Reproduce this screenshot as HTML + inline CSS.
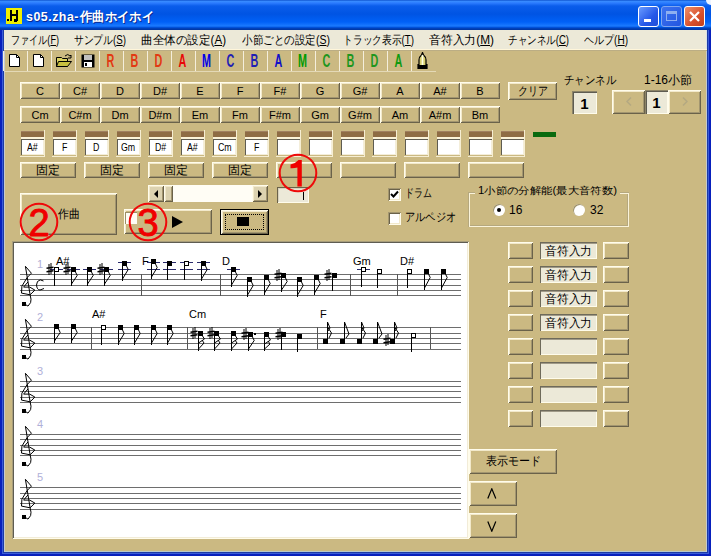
<!DOCTYPE html><html><head><meta charset="utf-8"><style>
*{margin:0;padding:0;box-sizing:border-box}
html,body{width:711px;height:556px;overflow:hidden;background:#fff}
body{position:relative;font-family:"Liberation Sans",sans-serif;font-size:11px;color:#000}
.a{position:absolute}
.b{position:absolute;background:#CBB982;box-shadow:inset 1px 1px 0 #FFFCEB,inset -1px -1px 0 #6A624A,inset 2px 2px 0 #F2E9CB,inset -2px -2px 0 #A39670;display:flex;align-items:center;justify-content:center;font-size:11px;white-space:nowrap}
.sunk{position:absolute;background:#fff;box-shadow:inset 1px 1px 0 #A39670,inset -1px -1px 0 #FFFCEB,inset 2px 2px 0 #6A624A,inset -2px -2px 0 #F2E9CB}
.sn{font-family:"Liberation Sans",sans-serif;font-size:11px;fill:#B0B0D8}
.ch{font-family:"Liberation Sans",sans-serif;font-size:11px;fill:#000}
.m{position:absolute;top:32px;font-size:12px;white-space:nowrap}
.tb{position:absolute;top:50px;width:24px;height:22px;display:flex;align-items:center;justify-content:center;font:18px "Liberation Sans",sans-serif;line-height:22px}
.tb span{display:inline-block;transform:scaleX(0.6)}
</style></head><body><div class="a" style="left:0;top:0;width:711px;height:556px;background:#0820BC"></div><div class="a" style="left:2px;top:29px;width:1px;height:525px;background:#3A5CD8"></div><div class="a" style="left:3px;top:29px;width:1px;height:524px;background:#1C3AA6"></div><div class="a" style="left:708px;top:29px;width:1px;height:525px;background:#3A5CD8"></div><div class="a" style="left:707px;top:29px;width:1px;height:524px;background:#1C3AA6"></div><div class="a" style="left:2px;top:553px;width:707px;height:1px;background:#3A5CD8"></div><div class="a" style="left:3px;top:552px;width:705px;height:1px;background:#1C3AA6"></div><div class="a" style="left:0;top:0;width:711px;height:30px;background:linear-gradient(#0040C0 0px,#3A8EFF 1px,#2C7CFF 3px,#0A5DEB 6px,#0054E3 14px,#0061F7 22px,#1A7AFF 26px,#0050D8 27.5px,#0038A8 29px,#0038A8 30px)"></div><div class="a" style="left:706px;top:0;width:5px;height:5px;background:#EDF3FF;border-bottom-left-radius:5px"></div><div class="a" style="left:4px;top:30px;width:703px;height:522px;background:#CBB982;box-shadow:inset 1px 0 0 #C4CAD0,inset -1px 0 0 #C4CAD0,inset 0 -1px 0 #B8C8CC"></div><div class="a" style="left:4px;top:30px;width:703px;height:19px;background:#ECE9D8;box-shadow:inset -1px 0 0 #D8E0E8"></div><div class="a" style="left:4px;top:49px;width:703px;height:1px;background:#FFF6DA"></div><div class="a" style="left:4px;top:50px;width:703px;height:1px;background:#BBAD84"></div><div class="m" style="left:11px"><span style="display:inline-block;white-space:nowrap;width:48px;vertical-align:top"><span style="display:inline-block;white-space:nowrap;font-size:12px;transform:scaleX(0.7578);transform-origin:0 50%">ファイル(<u>F</u>)</span></span></div><div class="m" style="left:74px"><span style="display:inline-block;white-space:nowrap;width:52px;vertical-align:top"><span style="display:inline-block;white-space:nowrap;font-size:12px;transform:scaleX(0.8123);transform-origin:0 50%">サンプル(<u>S</u>)</span></span></div><div class="m" style="left:141px"><span style="display:inline-block;white-space:nowrap;width:85px;vertical-align:top"><span style="display:inline-block;white-space:nowrap;font-size:12px;transform:scaleX(0.9657);transform-origin:0 50%">曲全体の設定(<u>A</u>)</span></span></div><div class="m" style="left:242px"><span style="display:inline-block;white-space:nowrap;width:88px;vertical-align:top"><span style="display:inline-block;white-space:nowrap;font-size:12px;transform:scaleX(0.8799);transform-origin:0 50%">小節ごとの設定(<u>S</u>)</span></span></div><div class="m" style="left:343px"><span style="display:inline-block;white-space:nowrap;width:71px;vertical-align:top"><span style="display:inline-block;white-space:nowrap;font-size:12px;transform:scaleX(0.8129);transform-origin:0 50%">トラック表示(<u>T</u>)</span></span></div><div class="m" style="left:429px"><span style="display:inline-block;white-space:nowrap;width:65px;vertical-align:top"><span style="display:inline-block;white-space:nowrap;font-size:12px;transform:scaleX(0.9848);transform-origin:0 50%">音符入力(<u>M</u>)</span></span></div><div class="m" style="left:508px"><span style="display:inline-block;white-space:nowrap;width:61px;vertical-align:top"><span style="display:inline-block;white-space:nowrap;font-size:12px;transform:scaleX(0.7956);transform-origin:0 50%">チャンネル(<u>C</u>)</span></span></div><div class="m" style="left:584px"><span style="display:inline-block;white-space:nowrap;width:44px;vertical-align:top"><span style="display:inline-block;white-space:nowrap;font-size:12px;transform:scaleX(0.8354);transform-origin:0 50%">ヘルプ(<u>H</u>)</span></span></div><div class="a" style="left:6px;top:8px;width:16px;height:16px;background:#F0F000"><div class="a" style="left:4px;top:2px;width:2px;height:11px;background:#000"></div><div class="a" style="left:10px;top:2px;width:2px;height:11px;background:#000"></div><div class="a" style="left:4px;top:6px;width:8px;height:2px;background:#000"></div><div class="a" style="left:8px;top:11px;width:3px;height:3px;background:#000"></div><div class="a" style="left:1px;top:11px;width:2px;height:2px;background:#000"></div></div><div class="a" style="left:26px;top:9px;color:#fff;text-shadow:1px 1px 0 #0A2A90;white-space:nowrap;font-weight:bold;line-height:15px"><span style="display:inline-block;white-space:nowrap;width:53px;vertical-align:top"><span style="display:inline-block;white-space:nowrap;font-size:13px;font-weight:bold;letter-spacing:0.5px;transform:scaleX(0.9582);transform-origin:0 50%">s05.zha-</span></span></div><div class="a" style="left:80px;top:9px;color:#fff;text-shadow:1px 1px 0 #0A2A90;white-space:nowrap;font-weight:bold;line-height:15px"><span style="display:inline-block;white-space:nowrap;width:74px;vertical-align:top"><span style="display:inline-block;white-space:nowrap;font-size:13px;font-weight:bold;transform:scaleX(0.9487);transform-origin:0 50%">作曲ホイホイ</span></span></div><div class="a" style="left:638px;top:6px;width:21px;height:21px;border:1px solid #fff;border-radius:3px;background:linear-gradient(135deg,#6A9CFF,#2558E8 60%,#1F4FD8)"><div class="a" style="left:5px;top:12px;width:7px;height:3px;background:#fff"></div></div><div class="a" style="left:661px;top:6px;width:21px;height:21px;border:1px solid #7FA6F0;border-radius:3px;background:linear-gradient(135deg,#3E73F0,#2256E0)"><div class="a" style="left:4px;top:4px;width:11px;height:10px;border:1px solid #8FB0F0;border-top-width:3px"></div></div><div class="a" style="left:684px;top:6px;width:21px;height:21px;border:1px solid #fff;border-radius:3px;background:linear-gradient(135deg,#F0906A,#D8502C 60%,#C0401E)"><svg width="19" height="19" style="position:absolute;left:0;top:0"><path d="M5,5 L14,14 M14,5 L5,14" stroke="#fff" stroke-width="2.2"/></svg></div><div class="a" style="left:3px;top:51px;width:1px;height:20px;background:#F4EEDC"></div><div class="a" style="left:27px;top:51px;width:1px;height:20px;background:#F4EEDC"></div><div class="a" style="left:51px;top:51px;width:1px;height:20px;background:#F4EEDC"></div><div class="a" style="left:75px;top:51px;width:1px;height:20px;background:#F4EEDC"></div><div class="a" style="left:99px;top:51px;width:1px;height:20px;background:#F4EEDC"></div><div class="a" style="left:123px;top:51px;width:1px;height:20px;background:#F4EEDC"></div><div class="a" style="left:147px;top:51px;width:1px;height:20px;background:#F4EEDC"></div><div class="a" style="left:171px;top:51px;width:1px;height:20px;background:#F4EEDC"></div><div class="a" style="left:195px;top:51px;width:1px;height:20px;background:#F4EEDC"></div><div class="a" style="left:219px;top:51px;width:1px;height:20px;background:#F4EEDC"></div><div class="a" style="left:243px;top:51px;width:1px;height:20px;background:#F4EEDC"></div><div class="a" style="left:267px;top:51px;width:1px;height:20px;background:#F4EEDC"></div><div class="a" style="left:291px;top:51px;width:1px;height:20px;background:#F4EEDC"></div><div class="a" style="left:315px;top:51px;width:1px;height:20px;background:#F4EEDC"></div><div class="a" style="left:339px;top:51px;width:1px;height:20px;background:#F4EEDC"></div><div class="a" style="left:363px;top:51px;width:1px;height:20px;background:#F4EEDC"></div><div class="a" style="left:387px;top:51px;width:1px;height:20px;background:#F4EEDC"></div><div class="a" style="left:411px;top:51px;width:1px;height:20px;background:#F4EEDC"></div><div class="a" style="left:4px;top:71px;width:432px;height:1px;background:#E4D9B6"></div><svg class="a" style="left:8px;top:54px" width="14" height="14"><path d="M1.5,0.5 H8.5 L11.5,3.5 V12.5 H1.5 Z" fill="#fff" stroke="#000"/><path d="M8.5,0.5 V3.5 H11.5" fill="none" stroke="#000"/></svg><svg class="a" style="left:32px;top:54px" width="14" height="14"><path d="M1.5,0.5 H8.5 L11.5,3.5 V12.5 H1.5 Z" fill="#fff" stroke="#000"/><path d="M8.5,0.5 V3.5 H11.5" fill="none" stroke="#000"/></svg><svg class="a" style="left:55px;top:53px" width="18" height="16"><path d="M1.5,4.5 H6.5 L7.5,5.5 H12.5 V13.5 H1.5 Z" fill="#D8D060" stroke="#000"/><path d="M3.5,8.5 H16.5 L12.5,13.5 H1.5 Z" fill="#C8C040" stroke="#000"/><path d="M10,3 Q13,0 15,3 L16,2 L16,5 L13,5" fill="none" stroke="#000"/></svg><svg class="a" style="left:81px;top:54px" width="14" height="14"><rect x="0.5" y="0.5" width="13" height="13" fill="#000"/><rect x="3" y="1" width="8" height="5" fill="#C0C0C0"/><rect x="3" y="8" width="8" height="5" fill="#fff"/><rect x="4" y="9" width="2" height="3" fill="#000"/></svg><div class="tb" style="left:98px;color:#E23A12;font-weight:bold"><span>R</span></div><div class="tb" style="left:122px;color:#E23A12;font-weight:bold"><span>B</span></div><div class="tb" style="left:146px;color:#E23A12;font-weight:bold"><span>D</span></div><div class="tb" style="left:170px;color:#E80808;font-weight:bold"><span>A</span></div><div class="tb" style="left:194px;color:#0000E8;font-weight:bold"><span>M</span></div><div class="tb" style="left:218px;color:#1E1EB4;font-weight:bold"><span>C</span></div><div class="tb" style="left:242px;color:#1E1EB4;font-weight:bold"><span>B</span></div><div class="tb" style="left:266px;color:#1010C8;font-weight:bold"><span>A</span></div><div class="tb" style="left:290px;color:#009A00;font-weight:bold"><span>M</span></div><div class="tb" style="left:314px;color:#1E961E;font-weight:bold"><span>C</span></div><div class="tb" style="left:338px;color:#1E961E;font-weight:bold"><span>B</span></div><div class="tb" style="left:362px;color:#1E961E;font-weight:bold"><span>D</span></div><div class="tb" style="left:386px;color:#109A10;font-weight:bold"><span>A</span></div><svg class="a" style="left:417px;top:52px" width="11" height="18"><path d="M5.5,0.5 L6.5,3 Q9,5 9,8 V12.5 H10 V16.5 H1 V12.5 H2 V8 Q2,5 4.5,3 Z" fill="#D8D070" stroke="#000" stroke-width="1.2"/><path d="M5.5,3 V14" stroke="#FFFFE8" stroke-width="1.6"/><rect x="1" y="13" width="9" height="4" fill="#000"/></svg><div class="b" style="left:20px;top:82px;width:40px;height:17px;"><span style="">C</span></div><div class="b" style="left:60px;top:82px;width:40px;height:17px;"><span style="">C#</span></div><div class="b" style="left:100px;top:82px;width:40px;height:17px;"><span style="">D</span></div><div class="b" style="left:140px;top:82px;width:40px;height:17px;"><span style="">D#</span></div><div class="b" style="left:180px;top:82px;width:40px;height:17px;"><span style="">E</span></div><div class="b" style="left:220px;top:82px;width:40px;height:17px;"><span style="">F</span></div><div class="b" style="left:260px;top:82px;width:40px;height:17px;"><span style="">F#</span></div><div class="b" style="left:300px;top:82px;width:40px;height:17px;"><span style="">G</span></div><div class="b" style="left:340px;top:82px;width:40px;height:17px;"><span style="">G#</span></div><div class="b" style="left:380px;top:82px;width:40px;height:17px;"><span style="">A</span></div><div class="b" style="left:420px;top:82px;width:40px;height:17px;"><span style="">A#</span></div><div class="b" style="left:460px;top:82px;width:40px;height:17px;"><span style="">B</span></div><div class="b" style="left:20px;top:106px;width:40px;height:17px;"><span style="">Cm</span></div><div class="b" style="left:60px;top:106px;width:40px;height:17px;"><span style="">C#m</span></div><div class="b" style="left:100px;top:106px;width:40px;height:17px;"><span style="">Dm</span></div><div class="b" style="left:140px;top:106px;width:40px;height:17px;"><span style="">D#m</span></div><div class="b" style="left:180px;top:106px;width:40px;height:17px;"><span style="">Em</span></div><div class="b" style="left:220px;top:106px;width:40px;height:17px;"><span style="">Fm</span></div><div class="b" style="left:260px;top:106px;width:40px;height:17px;"><span style="">F#m</span></div><div class="b" style="left:300px;top:106px;width:40px;height:17px;"><span style="">Gm</span></div><div class="b" style="left:340px;top:106px;width:40px;height:17px;"><span style="">G#m</span></div><div class="b" style="left:380px;top:106px;width:40px;height:17px;"><span style="">Am</span></div><div class="b" style="left:420px;top:106px;width:40px;height:17px;"><span style="">A#m</span></div><div class="b" style="left:460px;top:106px;width:40px;height:17px;"><span style="">Bm</span></div><div class="b" style="left:508px;top:82px;width:49px;height:18px;"><span style=""><span style="display:inline-block;white-space:nowrap;width:30px;vertical-align:top"><span style="display:inline-block;white-space:nowrap;font-size:12px;transform:scaleX(0.8333);transform-origin:0 50%">クリア</span></span></span></div><div class="a" style="left:564px;top:73px;white-space:nowrap;line-height:14px"><span style="display:inline-block;white-space:nowrap;width:52px;vertical-align:top"><span style="display:inline-block;white-space:nowrap;font-size:12px;transform:scaleX(0.8667);transform-origin:0 50%">チャンネル</span></span></div><div class="a" style="left:644px;top:73px;white-space:nowrap;line-height:14px"><span style="display:inline-block;white-space:nowrap;width:48px;vertical-align:top"><span style="display:inline-block;white-space:nowrap;font-size:12px;transform:scaleX(0.9993);transform-origin:0 50%">1-16小節</span></span></div><div class="a" style="left:572px;top:91px;width:25px;height:23px;background:#ECE9D8;box-shadow:inset 1px 1px 0 #8C8468,inset 2px 2px 0 #5E5C52,inset -1px -1px 0 #FFFCEB;display:flex;align-items:center;justify-content:center;font:bold 15px 'Liberation Sans',sans-serif;padding-top:1px">1</div><div class="b" style="left:612px;top:90px;width:33px;height:24px;"><span style=""><svg width="6" height="9"><path d="M5,0.5 L1,4.5 L5,8.5" fill="none" stroke="#B4A982" stroke-width="1.5"/></svg></span></div><div class="a" style="left:645px;top:90px;width:23px;height:24px;background:#ECE9D8;box-shadow:inset 1px 1px 0 #8C8468,inset 2px 2px 0 #5E5C52,inset -1px -1px 0 #FFFCEB;display:flex;align-items:center;justify-content:center;font:bold 15px 'Liberation Sans',sans-serif;padding-top:1px">1</div><div class="b" style="left:668px;top:90px;width:33px;height:24px;"><span style=""><svg width="6" height="9"><path d="M1,0.5 L5,4.5 L1,8.5" fill="none" stroke="#B4A982" stroke-width="1.5"/></svg></span></div><div class="a" style="left:20px;top:130px;width:25px;height:27px;box-shadow:inset -1px 0 0 #F6EED2,inset 0 -1px 0 #F6EED2"></div><div class="a" style="left:21px;top:131px;width:23px;height:6px;background:#8E6C44;box-shadow:inset 0 1px 0 #A08060"></div><div class="a" style="left:21px;top:137px;width:23px;height:2px;background:#FBF3D8"></div><div class="a" style="left:21px;top:139px;width:23px;height:16px;background:#FFFFFF;box-shadow:inset 1px 1px 0 #5E5C52,inset -1px -1px 0 #F4EEDA"></div><div class="a" style="left:21px;top:139px;width:23px;height:16px;display:flex;align-items:center;justify-content:center;line-height:16px"><span style="display:inline-block;white-space:nowrap;width:10.775px;vertical-align:top"><span style="display:inline-block;white-space:nowrap;font-size:11px;transform:scaleX(0.8000);transform-origin:0 50%">A#</span></span></div><div class="a" style="left:52px;top:130px;width:25px;height:27px;box-shadow:inset -1px 0 0 #F6EED2,inset 0 -1px 0 #F6EED2"></div><div class="a" style="left:53px;top:131px;width:23px;height:6px;background:#8E6C44;box-shadow:inset 0 1px 0 #A08060"></div><div class="a" style="left:53px;top:137px;width:23px;height:2px;background:#FBF3D8"></div><div class="a" style="left:53px;top:139px;width:23px;height:16px;background:#FFFFFF;box-shadow:inset 1px 1px 0 #5E5C52,inset -1px -1px 0 #F4EEDA"></div><div class="a" style="left:53px;top:139px;width:23px;height:16px;display:flex;align-items:center;justify-content:center;line-height:16px"><span style="display:inline-block;white-space:nowrap;width:5.3875px;vertical-align:top"><span style="display:inline-block;white-space:nowrap;font-size:11px;transform:scaleX(0.8000);transform-origin:0 50%">F</span></span></div><div class="a" style="left:84px;top:130px;width:25px;height:27px;box-shadow:inset -1px 0 0 #F6EED2,inset 0 -1px 0 #F6EED2"></div><div class="a" style="left:85px;top:131px;width:23px;height:6px;background:#8E6C44;box-shadow:inset 0 1px 0 #A08060"></div><div class="a" style="left:85px;top:137px;width:23px;height:2px;background:#FBF3D8"></div><div class="a" style="left:85px;top:139px;width:23px;height:16px;background:#FFFFFF;box-shadow:inset 1px 1px 0 #5E5C52,inset -1px -1px 0 #F4EEDA"></div><div class="a" style="left:85px;top:139px;width:23px;height:16px;display:flex;align-items:center;justify-content:center;line-height:16px"><span style="display:inline-block;white-space:nowrap;width:6.362500000000001px;vertical-align:top"><span style="display:inline-block;white-space:nowrap;font-size:11px;transform:scaleX(0.8000);transform-origin:0 50%">D</span></span></div><div class="a" style="left:116px;top:130px;width:25px;height:27px;box-shadow:inset -1px 0 0 #F6EED2,inset 0 -1px 0 #F6EED2"></div><div class="a" style="left:117px;top:131px;width:23px;height:6px;background:#8E6C44;box-shadow:inset 0 1px 0 #A08060"></div><div class="a" style="left:117px;top:137px;width:23px;height:2px;background:#FBF3D8"></div><div class="a" style="left:117px;top:139px;width:23px;height:16px;background:#FFFFFF;box-shadow:inset 1px 1px 0 #5E5C52,inset -1px -1px 0 #F4EEDA"></div><div class="a" style="left:117px;top:139px;width:23px;height:16px;display:flex;align-items:center;justify-content:center;line-height:16px"><span style="display:inline-block;white-space:nowrap;width:14.1875px;vertical-align:top"><span style="display:inline-block;white-space:nowrap;font-size:11px;transform:scaleX(0.8000);transform-origin:0 50%">Gm</span></span></div><div class="a" style="left:148px;top:130px;width:25px;height:27px;box-shadow:inset -1px 0 0 #F6EED2,inset 0 -1px 0 #F6EED2"></div><div class="a" style="left:149px;top:131px;width:23px;height:6px;background:#8E6C44;box-shadow:inset 0 1px 0 #A08060"></div><div class="a" style="left:149px;top:137px;width:23px;height:2px;background:#FBF3D8"></div><div class="a" style="left:149px;top:139px;width:23px;height:16px;background:#FFFFFF;box-shadow:inset 1px 1px 0 #5E5C52,inset -1px -1px 0 #F4EEDA"></div><div class="a" style="left:149px;top:139px;width:23px;height:16px;display:flex;align-items:center;justify-content:center;line-height:16px"><span style="display:inline-block;white-space:nowrap;width:11.25px;vertical-align:top"><span style="display:inline-block;white-space:nowrap;font-size:11px;transform:scaleX(0.8000);transform-origin:0 50%">D#</span></span></div><div class="a" style="left:180px;top:130px;width:25px;height:27px;box-shadow:inset -1px 0 0 #F6EED2,inset 0 -1px 0 #F6EED2"></div><div class="a" style="left:181px;top:131px;width:23px;height:6px;background:#8E6C44;box-shadow:inset 0 1px 0 #A08060"></div><div class="a" style="left:181px;top:137px;width:23px;height:2px;background:#FBF3D8"></div><div class="a" style="left:181px;top:139px;width:23px;height:16px;background:#FFFFFF;box-shadow:inset 1px 1px 0 #5E5C52,inset -1px -1px 0 #F4EEDA"></div><div class="a" style="left:181px;top:139px;width:23px;height:16px;display:flex;align-items:center;justify-content:center;line-height:16px"><span style="display:inline-block;white-space:nowrap;width:10.775px;vertical-align:top"><span style="display:inline-block;white-space:nowrap;font-size:11px;transform:scaleX(0.8000);transform-origin:0 50%">A#</span></span></div><div class="a" style="left:212px;top:130px;width:25px;height:27px;box-shadow:inset -1px 0 0 #F6EED2,inset 0 -1px 0 #F6EED2"></div><div class="a" style="left:213px;top:131px;width:23px;height:6px;background:#8E6C44;box-shadow:inset 0 1px 0 #A08060"></div><div class="a" style="left:213px;top:137px;width:23px;height:2px;background:#FBF3D8"></div><div class="a" style="left:213px;top:139px;width:23px;height:16px;background:#FFFFFF;box-shadow:inset 1px 1px 0 #5E5C52,inset -1px -1px 0 #F4EEDA"></div><div class="a" style="left:213px;top:139px;width:23px;height:16px;display:flex;align-items:center;justify-content:center;line-height:16px"><span style="display:inline-block;white-space:nowrap;width:13.6875px;vertical-align:top"><span style="display:inline-block;white-space:nowrap;font-size:11px;transform:scaleX(0.8000);transform-origin:0 50%">Cm</span></span></div><div class="a" style="left:244px;top:130px;width:25px;height:27px;box-shadow:inset -1px 0 0 #F6EED2,inset 0 -1px 0 #F6EED2"></div><div class="a" style="left:245px;top:131px;width:23px;height:6px;background:#8E6C44;box-shadow:inset 0 1px 0 #A08060"></div><div class="a" style="left:245px;top:137px;width:23px;height:2px;background:#FBF3D8"></div><div class="a" style="left:245px;top:139px;width:23px;height:16px;background:#FFFFFF;box-shadow:inset 1px 1px 0 #5E5C52,inset -1px -1px 0 #F4EEDA"></div><div class="a" style="left:245px;top:139px;width:23px;height:16px;display:flex;align-items:center;justify-content:center;line-height:16px"><span style="display:inline-block;white-space:nowrap;width:5.3875px;vertical-align:top"><span style="display:inline-block;white-space:nowrap;font-size:11px;transform:scaleX(0.8000);transform-origin:0 50%">F</span></span></div><div class="a" style="left:276px;top:130px;width:25px;height:27px;box-shadow:inset -1px 0 0 #F6EED2,inset 0 -1px 0 #F6EED2"></div><div class="a" style="left:277px;top:131px;width:23px;height:6px;background:#8E6C44;box-shadow:inset 0 1px 0 #A08060"></div><div class="a" style="left:277px;top:137px;width:23px;height:2px;background:#FBF3D8"></div><div class="a" style="left:277px;top:139px;width:23px;height:16px;background:#FFFFFF;box-shadow:inset 1px 1px 0 #5E5C52,inset -1px -1px 0 #F4EEDA"></div><div class="a" style="left:308px;top:130px;width:25px;height:27px;box-shadow:inset -1px 0 0 #F6EED2,inset 0 -1px 0 #F6EED2"></div><div class="a" style="left:309px;top:131px;width:23px;height:6px;background:#8E6C44;box-shadow:inset 0 1px 0 #A08060"></div><div class="a" style="left:309px;top:137px;width:23px;height:2px;background:#FBF3D8"></div><div class="a" style="left:309px;top:139px;width:23px;height:16px;background:#FFFFFF;box-shadow:inset 1px 1px 0 #5E5C52,inset -1px -1px 0 #F4EEDA"></div><div class="a" style="left:340px;top:130px;width:25px;height:27px;box-shadow:inset -1px 0 0 #F6EED2,inset 0 -1px 0 #F6EED2"></div><div class="a" style="left:341px;top:131px;width:23px;height:6px;background:#8E6C44;box-shadow:inset 0 1px 0 #A08060"></div><div class="a" style="left:341px;top:137px;width:23px;height:2px;background:#FBF3D8"></div><div class="a" style="left:341px;top:139px;width:23px;height:16px;background:#FFFFFF;box-shadow:inset 1px 1px 0 #5E5C52,inset -1px -1px 0 #F4EEDA"></div><div class="a" style="left:372px;top:130px;width:25px;height:27px;box-shadow:inset -1px 0 0 #F6EED2,inset 0 -1px 0 #F6EED2"></div><div class="a" style="left:373px;top:131px;width:23px;height:6px;background:#8E6C44;box-shadow:inset 0 1px 0 #A08060"></div><div class="a" style="left:373px;top:137px;width:23px;height:2px;background:#FBF3D8"></div><div class="a" style="left:373px;top:139px;width:23px;height:16px;background:#FFFFFF;box-shadow:inset 1px 1px 0 #5E5C52,inset -1px -1px 0 #F4EEDA"></div><div class="a" style="left:404px;top:130px;width:25px;height:27px;box-shadow:inset -1px 0 0 #F6EED2,inset 0 -1px 0 #F6EED2"></div><div class="a" style="left:405px;top:131px;width:23px;height:6px;background:#8E6C44;box-shadow:inset 0 1px 0 #A08060"></div><div class="a" style="left:405px;top:137px;width:23px;height:2px;background:#FBF3D8"></div><div class="a" style="left:405px;top:139px;width:23px;height:16px;background:#FFFFFF;box-shadow:inset 1px 1px 0 #5E5C52,inset -1px -1px 0 #F4EEDA"></div><div class="a" style="left:436px;top:130px;width:25px;height:27px;box-shadow:inset -1px 0 0 #F6EED2,inset 0 -1px 0 #F6EED2"></div><div class="a" style="left:437px;top:131px;width:23px;height:6px;background:#8E6C44;box-shadow:inset 0 1px 0 #A08060"></div><div class="a" style="left:437px;top:137px;width:23px;height:2px;background:#FBF3D8"></div><div class="a" style="left:437px;top:139px;width:23px;height:16px;background:#FFFFFF;box-shadow:inset 1px 1px 0 #5E5C52,inset -1px -1px 0 #F4EEDA"></div><div class="a" style="left:468px;top:130px;width:25px;height:27px;box-shadow:inset -1px 0 0 #F6EED2,inset 0 -1px 0 #F6EED2"></div><div class="a" style="left:469px;top:131px;width:23px;height:6px;background:#8E6C44;box-shadow:inset 0 1px 0 #A08060"></div><div class="a" style="left:469px;top:137px;width:23px;height:2px;background:#FBF3D8"></div><div class="a" style="left:469px;top:139px;width:23px;height:16px;background:#FFFFFF;box-shadow:inset 1px 1px 0 #5E5C52,inset -1px -1px 0 #F4EEDA"></div><div class="a" style="left:500px;top:130px;width:25px;height:27px;box-shadow:inset -1px 0 0 #F6EED2,inset 0 -1px 0 #F6EED2"></div><div class="a" style="left:501px;top:131px;width:23px;height:6px;background:#8E6C44;box-shadow:inset 0 1px 0 #A08060"></div><div class="a" style="left:501px;top:137px;width:23px;height:2px;background:#FBF3D8"></div><div class="a" style="left:501px;top:139px;width:23px;height:16px;background:#FFFFFF;box-shadow:inset 1px 1px 0 #5E5C52,inset -1px -1px 0 #F4EEDA"></div><div class="a" style="left:533px;top:132px;width:23px;height:5px;background:#0A6A10"></div><div class="b" style="left:20px;top:162px;width:56px;height:16px;"><span style=""><span style="display:inline-block;white-space:nowrap;width:24px;vertical-align:top"><span style="display:inline-block;white-space:nowrap;font-size:12px;transform:scaleX(1.0000);transform-origin:0 50%">固定</span></span></span></div><div class="b" style="left:84px;top:162px;width:56px;height:16px;"><span style=""><span style="display:inline-block;white-space:nowrap;width:24px;vertical-align:top"><span style="display:inline-block;white-space:nowrap;font-size:12px;transform:scaleX(1.0000);transform-origin:0 50%">固定</span></span></span></div><div class="b" style="left:148px;top:162px;width:56px;height:16px;"><span style=""><span style="display:inline-block;white-space:nowrap;width:24px;vertical-align:top"><span style="display:inline-block;white-space:nowrap;font-size:12px;transform:scaleX(1.0000);transform-origin:0 50%">固定</span></span></span></div><div class="b" style="left:212px;top:162px;width:56px;height:16px;"><span style=""><span style="display:inline-block;white-space:nowrap;width:24px;vertical-align:top"><span style="display:inline-block;white-space:nowrap;font-size:12px;transform:scaleX(1.0000);transform-origin:0 50%">固定</span></span></span></div><div class="b" style="left:276px;top:162px;width:56px;height:16px;"><span style=""></span></div><div class="b" style="left:340px;top:162px;width:56px;height:16px;"><span style=""></span></div><div class="b" style="left:404px;top:162px;width:56px;height:16px;"><span style=""></span></div><div class="b" style="left:468px;top:162px;width:56px;height:16px;"><span style=""></span></div><div class="a" style="left:277px;top:187px;width:32px;height:16px;background:#ECE9D8;box-shadow:inset 1px 1px 0 #6A624A,inset -1px -1px 0 #FFFCEB,inset 2px 2px 0 #D8D2BC"></div><div class="a" style="left:303px;top:192px;width:1px;height:8px;background:#000"></div><div class="a" style="left:148px;top:185px;width:120px;height:17px;background:#FFFDF5"></div><div class="b" style="left:148px;top:185px;width:16px;height:17px;background:#DCD2B0"><span style=""><svg width="5" height="8"><path d="M4,0 V8 L0,4 Z" fill="#000"/></svg></span></div><div class="b" style="left:164px;top:185px;width:9px;height:17px;background:#DCD2B0"><span style=""></span></div><div class="b" style="left:252px;top:185px;width:16px;height:17px;background:#DCD2B0"><span style=""><svg width="5" height="8"><path d="M0,0 V8 L4,4 Z" fill="#000"/></svg></span></div><div class="b" style="left:20px;top:193px;width:97px;height:42px;"><span style=""><span style="display:inline-block;white-space:nowrap;width:22px;vertical-align:top"><span style="display:inline-block;white-space:nowrap;font-size:12px;transform:scaleX(0.9167);transform-origin:0 50%">作曲</span></span></span></div><div class="b" style="left:124px;top:209px;width:88px;height:25px;"><span style="padding-left:20px;display:flex"><svg width="12" height="12"><path d="M0,0 V12 L11,6 Z" fill="#000"/></svg></span></div><div class="a" style="left:125px;top:212px;width:12px;height:12px;background:#FFFDF5;box-shadow:inset 1px 1px 0 #9C8F66"></div><div class="a" style="left:220px;top:209px;width:49px;height:26px;border:1px solid #000"></div><div class="b" style="left:221px;top:210px;width:47px;height:24px;"><span style=""></span></div><div class="a" style="left:225px;top:214px;width:39px;height:16px;border:1px dotted #000"></div><div class="a" style="left:237px;top:217px;width:12px;height:9px;background:#000"></div><div class="sunk" style="left:388px;top:188px;width:13px;height:13px"></div><svg class="a" style="left:390px;top:190px" width="9" height="9"><path d="M1,4 L3.5,6.5 L8,1.5" fill="none" stroke="#000" stroke-width="2"/></svg><div class="a" style="left:405px;top:186px;white-space:nowrap;line-height:14px"><span style="display:inline-block;white-space:nowrap;width:27px;vertical-align:top"><span style="display:inline-block;white-space:nowrap;font-size:12px;transform:scaleX(0.7500);transform-origin:0 50%">ドラム</span></span></div><div class="sunk" style="left:388px;top:212px;width:13px;height:13px"></div><div class="a" style="left:405px;top:210px;white-space:nowrap;line-height:14px"><span style="display:inline-block;white-space:nowrap;width:51px;vertical-align:top"><span style="display:inline-block;white-space:nowrap;font-size:12px;transform:scaleX(0.8500);transform-origin:0 50%">アルペジオ</span></span></div><div class="a" style="left:468px;top:192px;width:161px;height:35px;box-shadow:inset 1px 1px 0 #B5A87E,inset 2px 2px 0 #FAF3DA,inset -1px -1px 0 #FAF3DA,inset -2px -2px 0 #B5A87E"></div><div class="a" style="left:475px;top:184px;padding:0 3px;background:#CBB982;white-space:nowrap;line-height:13px;height:13px"><span style="display:inline-block;white-space:nowrap;width:139px;vertical-align:top"><span style="display:inline-block;white-space:nowrap;font-size:10px;transform:scaleX(1.1372);transform-origin:0 50%">1小節の分解能(最大音符数)</span></span></div><div class="a" style="left:493px;top:204px;width:12px;height:12px;border-radius:50%;background:#fff;box-shadow:inset 1px 1px 0 #9C8F66"><div class="a" style="left:4px;top:4px;width:4px;height:4px;border-radius:50%;background:#000"></div></div><div class="a" style="left:509px;top:203px;font-size:12px">16</div><div class="a" style="left:573px;top:204px;width:12px;height:12px;border-radius:50%;background:#fff;box-shadow:inset 1px 1px 0 #9C8F66"></div><div class="a" style="left:590px;top:203px;font-size:12px">32</div><div class="a" style="left:12px;top:241px;width:457px;height:298px;background:#fff;box-shadow:inset 1px 1px 0 #A89E7C,inset -1px -1px 0 #FFFCEB,inset 2px 2px 0 #5E5C52,inset -2px -2px 0 #F2ECD8"></div><svg width="711" height="556" style="position:absolute;left:0;top:0"><rect x="20" y="274" width="441" height="1" fill="#6E6E6E"/><rect x="20" y="279" width="441" height="1" fill="#6E6E6E"/><rect x="20" y="285" width="441" height="1" fill="#6E6E6E"/><rect x="20" y="290" width="441" height="1" fill="#6E6E6E"/><rect x="20" y="295" width="441" height="1" fill="#6E6E6E"/><path d="M25.4,266.3 L31.4,273.2 L27.1,277.6 L21.9,286.2 L21.5,293.1 L30.1,294.8 L34.9,290.1 L29.7,287.1 L23.6,287.1 L28.0,281.9" fill="none" stroke="#000" stroke-width="1"/><path d="M25.4,266.3 L28.0,281.9 L30.1,294.8 L31.0,299.2 L30.6,302.6 L28.0,306.1 L25.0,304.3" fill="none" stroke="#000" stroke-width="1"/><rect x="22" y="302" width="4" height="4" fill="#000"/><text x="37" y="268" class="sn">1</text><rect x="20" y="327" width="441" height="1" fill="#6E6E6E"/><rect x="20" y="333" width="441" height="1" fill="#6E6E6E"/><rect x="20" y="338" width="441" height="1" fill="#6E6E6E"/><rect x="20" y="343" width="441" height="1" fill="#6E6E6E"/><rect x="20" y="349" width="441" height="1" fill="#6E6E6E"/><path d="M25.4,319.3 L31.4,326.2 L27.1,330.6 L21.9,339.2 L21.5,346.1 L30.1,347.8 L34.9,343.1 L29.7,340.1 L23.6,340.1 L28.0,334.9" fill="none" stroke="#000" stroke-width="1"/><path d="M25.4,319.3 L28.0,334.9 L30.1,347.8 L31.0,352.2 L30.6,355.6 L28.0,359.1 L25.0,357.3" fill="none" stroke="#000" stroke-width="1"/><rect x="22" y="355" width="4" height="4" fill="#000"/><text x="37" y="321" class="sn">2</text><rect x="20" y="381" width="441" height="1" fill="#6E6E6E"/><rect x="20" y="386" width="441" height="1" fill="#6E6E6E"/><rect x="20" y="391" width="441" height="1" fill="#6E6E6E"/><rect x="20" y="397" width="441" height="1" fill="#6E6E6E"/><rect x="20" y="402" width="441" height="1" fill="#6E6E6E"/><path d="M25.4,373.3 L31.4,380.2 L27.1,384.6 L21.9,393.2 L21.5,400.1 L30.1,401.8 L34.9,397.1 L29.7,394.1 L23.6,394.1 L28.0,388.9" fill="none" stroke="#000" stroke-width="1"/><path d="M25.4,373.3 L28.0,388.9 L30.1,401.8 L31.0,406.2 L30.6,409.6 L28.0,413.1 L25.0,411.3" fill="none" stroke="#000" stroke-width="1"/><rect x="22" y="409" width="4" height="4" fill="#000"/><text x="37" y="375" class="sn">3</text><rect x="20" y="434" width="441" height="1" fill="#6E6E6E"/><rect x="20" y="439" width="441" height="1" fill="#6E6E6E"/><rect x="20" y="445" width="441" height="1" fill="#6E6E6E"/><rect x="20" y="450" width="441" height="1" fill="#6E6E6E"/><rect x="20" y="455" width="441" height="1" fill="#6E6E6E"/><path d="M25.4,426.3 L31.4,433.2 L27.1,437.6 L21.9,446.2 L21.5,453.1 L30.1,454.8 L34.9,450.1 L29.7,447.1 L23.6,447.1 L28.0,441.9" fill="none" stroke="#000" stroke-width="1"/><path d="M25.4,426.3 L28.0,441.9 L30.1,454.8 L31.0,459.2 L30.6,462.6 L28.0,466.1 L25.0,464.3" fill="none" stroke="#000" stroke-width="1"/><rect x="22" y="462" width="4" height="4" fill="#000"/><text x="37" y="428" class="sn">4</text><rect x="20" y="487" width="441" height="1" fill="#6E6E6E"/><rect x="20" y="493" width="441" height="1" fill="#6E6E6E"/><rect x="20" y="498" width="441" height="1" fill="#6E6E6E"/><rect x="20" y="503" width="441" height="1" fill="#6E6E6E"/><rect x="20" y="509" width="441" height="1" fill="#6E6E6E"/><path d="M25.4,479.3 L31.4,486.2 L27.1,490.6 L21.9,499.2 L21.5,506.1 L30.1,507.8 L34.9,503.1 L29.7,500.1 L23.6,500.1 L28.0,494.9" fill="none" stroke="#000" stroke-width="1"/><path d="M25.4,479.3 L28.0,494.9 L30.1,507.8 L31.0,512.2 L30.6,515.6 L28.0,519.1 L25.0,517.3" fill="none" stroke="#000" stroke-width="1"/><rect x="22" y="515" width="4" height="4" fill="#000"/><text x="37" y="481" class="sn">5</text><path d="M43.5,281 Q40,278.5 37.5,281.5 L36.5,285 Q37,290 40,290 L44,288.5" fill="none" stroke="#000" stroke-width="1"/><rect x="141" y="274" width="1" height="22" fill="#555"/><rect x="220" y="274" width="1" height="22" fill="#555"/><rect x="350" y="274" width="1" height="22" fill="#555"/><rect x="397" y="274" width="1" height="22" fill="#555"/><rect x="50" y="269" width="13" height="1" fill="#2A2A6A"/><rect x="67" y="269" width="13" height="1" fill="#2A2A6A"/><rect x="83" y="269" width="13" height="1" fill="#2A2A6A"/><rect x="100" y="269" width="13" height="1" fill="#2A2A6A"/><rect x="118" y="262" width="13" height="1" fill="#2A2A6A"/><rect x="118" y="269" width="13" height="1" fill="#2A2A6A"/><rect x="147" y="262" width="13" height="1" fill="#2A2A6A"/><rect x="147" y="269" width="13" height="1" fill="#2A2A6A"/><rect x="163" y="262" width="13" height="1" fill="#2A2A6A"/><rect x="163" y="269" width="13" height="1" fill="#2A2A6A"/><rect x="180" y="262" width="13" height="1" fill="#2A2A6A"/><rect x="180" y="269" width="13" height="1" fill="#2A2A6A"/><rect x="197" y="262" width="13" height="1" fill="#2A2A6A"/><rect x="197" y="269" width="13" height="1" fill="#2A2A6A"/><rect x="227" y="269" width="13" height="1" fill="#2A2A6A"/><rect x="357" y="269" width="13" height="1" fill="#2A2A6A"/><text x="56" y="265" class="ch">A#</text><text x="142" y="265" class="ch">F</text><text x="222" y="265" class="ch">D</text><text x="353" y="265" class="ch">Gm</text><text x="400" y="265" class="ch">D#</text><path d="M49,264 V275 M51,263 V274" stroke="#000" stroke-width="1" fill="none"/><path d="M46.5,268.2 L53.5,267.2 M46.5,271.7 L53.5,270.7" stroke="#000" stroke-width="1.6" fill="none"/><rect x="54" y="271" width="1" height="15" fill="#000"/><rect x="54.5" y="267.5" width="4" height="4" fill="#fff" stroke="#000" stroke-width="1"/><path d="M66,264 V275 M68,263 V274" stroke="#000" stroke-width="1" fill="none"/><path d="M63.5,268.2 L70.5,267.2 M63.5,271.7 L70.5,270.7" stroke="#000" stroke-width="1.6" fill="none"/><rect x="71" y="271" width="1" height="15" fill="#000"/><path d="M75.5,272 L77.2,275.5 L71.5,284" fill="none" stroke="#000" stroke-width="1"/><rect x="71" y="267" width="5" height="5" fill="#000"/><rect x="87" y="271" width="1" height="15" fill="#000"/><path d="M91.5,272 L93.2,275.5 L87.5,284" fill="none" stroke="#000" stroke-width="1"/><rect x="87" y="267" width="5" height="5" fill="#000"/><path d="M100,264 V275 M102,263 V274" stroke="#000" stroke-width="1" fill="none"/><path d="M97.5,268.2 L104.5,267.2 M97.5,271.7 L104.5,270.7" stroke="#000" stroke-width="1.6" fill="none"/><rect x="104" y="271" width="1" height="15" fill="#000"/><path d="M108.5,272 L110.2,275.5 L104.5,284" fill="none" stroke="#000" stroke-width="1"/><rect x="104" y="267" width="5" height="5" fill="#000"/><rect x="122" y="265" width="1" height="16" fill="#000"/><path d="M126.5,266 L128.2,269.5 L122.5,279" fill="none" stroke="#000" stroke-width="1"/><rect x="122" y="261" width="5" height="5" fill="#000"/><rect x="151" y="263" width="1" height="16" fill="#000"/><path d="M155.5,264 L157.2,267.5 L151.5,277" fill="none" stroke="#000" stroke-width="1"/><rect x="151" y="259" width="5" height="5" fill="#000"/><rect x="167" y="265" width="1" height="15" fill="#000"/><rect x="167" y="261" width="5" height="5" fill="#000"/><rect x="184" y="265" width="1" height="15" fill="#000"/><rect x="184.5" y="261.5" width="4" height="4" fill="#fff" stroke="#000" stroke-width="1"/><rect x="201" y="265" width="1" height="16" fill="#000"/><path d="M205.5,266 L207.2,269.5 L201.5,279" fill="none" stroke="#000" stroke-width="1"/><rect x="201" y="261" width="5" height="5" fill="#000"/><rect x="231" y="271" width="1" height="16" fill="#000"/><path d="M235.5,272 L237.2,275.5 L231.5,285" fill="none" stroke="#000" stroke-width="1"/><rect x="231" y="267" width="5" height="5" fill="#000"/><rect x="247" y="281" width="1" height="16" fill="#000"/><path d="M251.5,282 L253.2,285.5 L247.5,295" fill="none" stroke="#000" stroke-width="1"/><rect x="247" y="277" width="5" height="5" fill="#000"/><rect x="264" y="279" width="1" height="16" fill="#000"/><path d="M268.5,280 L270.2,283.5 L264.5,293" fill="none" stroke="#000" stroke-width="1"/><rect x="264" y="275" width="5" height="5" fill="#000"/><path d="M277,270 V281 M279,269 V280" stroke="#000" stroke-width="1" fill="none"/><path d="M274.5,274.2 L281.5,273.2 M274.5,277.7 L281.5,276.7" stroke="#000" stroke-width="1.6" fill="none"/><rect x="281" y="277" width="1" height="15" fill="#000"/><path d="M285.5,278 L287.2,281.5 L281.5,290" fill="none" stroke="#000" stroke-width="1"/><rect x="281" y="273" width="5" height="5" fill="#000"/><rect x="297" y="281" width="1" height="16" fill="#000"/><path d="M301.5,282 L303.2,285.5 L297.5,295" fill="none" stroke="#000" stroke-width="1"/><rect x="297" y="277" width="5" height="5" fill="#000"/><rect x="314" y="279" width="1" height="16" fill="#000"/><path d="M318.5,280 L320.2,283.5 L314.5,293" fill="none" stroke="#000" stroke-width="1"/><rect x="314" y="275" width="5" height="5" fill="#000"/><path d="M327,270 V281 M329,269 V280" stroke="#000" stroke-width="1" fill="none"/><path d="M324.5,274.2 L331.5,273.2 M324.5,277.7 L331.5,276.7" stroke="#000" stroke-width="1.6" fill="none"/><rect x="332" y="277" width="1" height="14" fill="#000"/><rect x="332" y="273" width="5" height="5" fill="#000"/><rect x="361" y="271" width="1" height="16" fill="#000"/><rect x="361.5" y="267.5" width="4" height="4" fill="#fff" stroke="#000" stroke-width="1"/><rect x="377" y="273" width="1" height="15" fill="#000"/><rect x="377.5" y="269.5" width="4" height="4" fill="#fff" stroke="#000" stroke-width="1"/><rect x="407" y="273" width="1" height="15" fill="#000"/><rect x="407.5" y="269.5" width="4" height="4" fill="#fff" stroke="#000" stroke-width="1"/><rect x="424" y="273" width="1" height="17" fill="#000"/><path d="M428.5,274 L430.2,277.5 L424.5,288" fill="none" stroke="#000" stroke-width="1"/><rect x="424" y="269" width="5" height="5" fill="#000"/><rect x="441" y="273" width="1" height="17" fill="#000"/><path d="M445.5,274 L447.2,277.5 L441.5,288" fill="none" stroke="#000" stroke-width="1"/><rect x="441" y="269" width="5" height="5" fill="#000"/><rect x="91" y="327" width="1" height="22" fill="#555"/><rect x="187" y="327" width="1" height="22" fill="#555"/><rect x="317" y="327" width="1" height="22" fill="#555"/><rect x="430" y="327" width="1" height="22" fill="#555"/><text x="92" y="318" class="ch">A#</text><text x="189" y="318" class="ch">Cm</text><text x="320" y="318" class="ch">F</text><rect x="54" y="328" width="1" height="15" fill="#000"/><path d="M58.5,329 L60.2,332.5 L54.5,341" fill="none" stroke="#000" stroke-width="1"/><rect x="54" y="324" width="5" height="5" fill="#000"/><rect x="71" y="328" width="1" height="15" fill="#000"/><path d="M75.5,329 L77.2,332.5 L71.5,341" fill="none" stroke="#000" stroke-width="1"/><rect x="71" y="324" width="5" height="5" fill="#000"/><rect x="101" y="329" width="1" height="16" fill="#000"/><rect x="101.5" y="325.5" width="4" height="4" fill="#fff" stroke="#000" stroke-width="1"/><rect x="118" y="329" width="1" height="16" fill="#000"/><path d="M122.5,330 L124.2,333.5 L118.5,343" fill="none" stroke="#000" stroke-width="1"/><rect x="118" y="325" width="5" height="5" fill="#000"/><rect x="134" y="329" width="1" height="16" fill="#000"/><path d="M138.5,330 L140.2,333.5 L134.5,343" fill="none" stroke="#000" stroke-width="1"/><rect x="134" y="325" width="5" height="5" fill="#000"/><rect x="151" y="329" width="1" height="16" fill="#000"/><path d="M155.5,330 L157.2,333.5 L151.5,343" fill="none" stroke="#000" stroke-width="1"/><rect x="151" y="325" width="5" height="5" fill="#000"/><rect x="167" y="329" width="1" height="16" fill="#000"/><path d="M171.5,330 L173.2,333.5 L167.5,343" fill="none" stroke="#000" stroke-width="1"/><rect x="167" y="325" width="5" height="5" fill="#000"/><path d="M193,328 V339 M195,327 V338" stroke="#000" stroke-width="1" fill="none"/><path d="M190.5,332.2 L197.5,331.2 M190.5,335.7 L197.5,334.7" stroke="#000" stroke-width="1.6" fill="none"/><rect x="198" y="335" width="1" height="16" fill="#000"/><path d="M202.5,336 L204.5,339 L198.5,343 M202,340 L204,343 L198.5,349" fill="none" stroke="#000" stroke-width="1"/><rect x="198" y="331" width="5" height="5" fill="#000"/><path d="M210,328 V339 M212,327 V338" stroke="#000" stroke-width="1" fill="none"/><path d="M207.5,332.2 L214.5,331.2 M207.5,335.7 L214.5,334.7" stroke="#000" stroke-width="1.6" fill="none"/><rect x="214" y="335" width="1" height="16" fill="#000"/><path d="M218.5,336 L220.5,339 L214.5,343 M218,340 L220,343 L214.5,349" fill="none" stroke="#000" stroke-width="1"/><rect x="214" y="331" width="5" height="5" fill="#000"/><rect x="231" y="335" width="1" height="16" fill="#000"/><path d="M235.5,336 L237.5,339 L231.5,343 M235,340 L237,343 L231.5,349" fill="none" stroke="#000" stroke-width="1"/><rect x="231" y="331" width="5" height="5" fill="#000"/><path d="M244,329 V340 M246,328 V339" stroke="#000" stroke-width="1" fill="none"/><path d="M241.5,333.2 L248.5,332.2 M241.5,336.7 L248.5,335.7" stroke="#000" stroke-width="1.6" fill="none"/><rect x="248" y="336" width="1" height="15" fill="#000"/><path d="M252.5,337 L254.2,340.5 L248.5,349" fill="none" stroke="#000" stroke-width="1"/><rect x="248" y="332" width="5" height="5" fill="#000"/><rect x="254" y="333" width="2" height="2" fill="#000"/><rect x="264" y="336" width="1" height="15" fill="#000"/><path d="M268.5,337 L270.5,340 L264.5,344 M268,341 L270,344 L264.5,349" fill="none" stroke="#000" stroke-width="1"/><rect x="264" y="332" width="5" height="5" fill="#000"/><path d="M278,329 V340 M280,328 V339" stroke="#000" stroke-width="1" fill="none"/><path d="M275.5,333.2 L282.5,332.2 M275.5,336.7 L282.5,335.7" stroke="#000" stroke-width="1.6" fill="none"/><rect x="281" y="336" width="1" height="14" fill="#000"/><rect x="281" y="332" width="5" height="5" fill="#000"/><rect x="297" y="338" width="1" height="14" fill="#000"/><rect x="297" y="334" width="5" height="5" fill="#000"/><rect x="327" y="322" width="1" height="17" fill="#000"/><path d="M327.5,322 L330,328 L328,331 M327.5,327 L331.5,333 L329,338" fill="none" stroke="#000" stroke-width="1"/><rect x="323" y="339" width="5" height="5" fill="#000"/><rect x="344" y="322" width="1" height="17" fill="#000"/><path d="M344.5,322 L349,334 L346,338" fill="none" stroke="#000" stroke-width="1"/><rect x="340" y="339" width="5" height="5" fill="#000"/><rect x="361" y="322" width="1" height="17" fill="#000"/><path d="M361.5,322 L364,328 L362,331 M361.5,327 L365.5,333 L363,338" fill="none" stroke="#000" stroke-width="1"/><rect x="357" y="339" width="5" height="5" fill="#000"/><rect x="377" y="322" width="1" height="17" fill="#000"/><path d="M377.5,322 L382,334 L379,338" fill="none" stroke="#000" stroke-width="1"/><rect x="373" y="339" width="5" height="5" fill="#000"/><path d="M386,335 V346 M388,334 V345" stroke="#000" stroke-width="1" fill="none"/><path d="M383.5,339.2 L390.5,338.2 M383.5,342.7 L390.5,341.7" stroke="#000" stroke-width="1.6" fill="none"/><rect x="394" y="322" width="1" height="17" fill="#000"/><path d="M394.5,322 L397,328 L395,331 M394.5,327 L398.5,333 L396,338" fill="none" stroke="#000" stroke-width="1"/><rect x="390" y="339" width="5" height="5" fill="#000"/><rect x="411" y="337" width="1" height="15" fill="#000"/><rect x="411.5" y="333.5" width="4" height="4" fill="#fff" stroke="#000" stroke-width="1"/></svg><div class="b" style="left:508px;top:242px;width:25px;height:17px;"><span style=""></span></div><div class="a" style="left:540px;top:242px;width:57px;height:17px;background:#ECE9D8;box-shadow:inset 1px 1px 0 #6E6A5A,inset 0 2px 0 #A09A88,inset -1px -1px 0 #FFFCEB;font-size:12px;line-height:18px;text-align:center"><span style="display:inline-block;white-space:nowrap;width:47px;vertical-align:top"><span style="display:inline-block;white-space:nowrap;font-size:12px;transform:scaleX(0.9792);transform-origin:0 50%">音符入力</span></span></div><div class="b" style="left:603px;top:242px;width:26px;height:17px;"><span style=""></span></div><div class="b" style="left:508px;top:266px;width:25px;height:17px;"><span style=""></span></div><div class="a" style="left:540px;top:266px;width:57px;height:17px;background:#ECE9D8;box-shadow:inset 1px 1px 0 #6E6A5A,inset 0 2px 0 #A09A88,inset -1px -1px 0 #FFFCEB;font-size:12px;line-height:18px;text-align:center"><span style="display:inline-block;white-space:nowrap;width:47px;vertical-align:top"><span style="display:inline-block;white-space:nowrap;font-size:12px;transform:scaleX(0.9792);transform-origin:0 50%">音符入力</span></span></div><div class="b" style="left:603px;top:266px;width:26px;height:17px;"><span style=""></span></div><div class="b" style="left:508px;top:290px;width:25px;height:17px;"><span style=""></span></div><div class="a" style="left:540px;top:290px;width:57px;height:17px;background:#ECE9D8;box-shadow:inset 1px 1px 0 #6E6A5A,inset 0 2px 0 #A09A88,inset -1px -1px 0 #FFFCEB;font-size:12px;line-height:18px;text-align:center"><span style="display:inline-block;white-space:nowrap;width:47px;vertical-align:top"><span style="display:inline-block;white-space:nowrap;font-size:12px;transform:scaleX(0.9792);transform-origin:0 50%">音符入力</span></span></div><div class="b" style="left:603px;top:290px;width:26px;height:17px;"><span style=""></span></div><div class="b" style="left:508px;top:314px;width:25px;height:17px;"><span style=""></span></div><div class="a" style="left:540px;top:314px;width:57px;height:17px;background:#ECE9D8;box-shadow:inset 1px 1px 0 #6E6A5A,inset 0 2px 0 #A09A88,inset -1px -1px 0 #FFFCEB;font-size:12px;line-height:18px;text-align:center"><span style="display:inline-block;white-space:nowrap;width:47px;vertical-align:top"><span style="display:inline-block;white-space:nowrap;font-size:12px;transform:scaleX(0.9792);transform-origin:0 50%">音符入力</span></span></div><div class="b" style="left:603px;top:314px;width:26px;height:17px;"><span style=""></span></div><div class="b" style="left:508px;top:338px;width:25px;height:17px;"><span style=""></span></div><div class="a" style="left:540px;top:338px;width:57px;height:17px;background:#ECE9D8;box-shadow:inset 1px 1px 0 #6E6A5A,inset 0 2px 0 #A09A88,inset -1px -1px 0 #FFFCEB;font-size:12px;line-height:18px;text-align:center"></div><div class="b" style="left:603px;top:338px;width:26px;height:17px;"><span style=""></span></div><div class="b" style="left:508px;top:362px;width:25px;height:17px;"><span style=""></span></div><div class="a" style="left:540px;top:362px;width:57px;height:17px;background:#ECE9D8;box-shadow:inset 1px 1px 0 #6E6A5A,inset 0 2px 0 #A09A88,inset -1px -1px 0 #FFFCEB;font-size:12px;line-height:18px;text-align:center"></div><div class="b" style="left:603px;top:362px;width:26px;height:17px;"><span style=""></span></div><div class="b" style="left:508px;top:386px;width:25px;height:17px;"><span style=""></span></div><div class="a" style="left:540px;top:386px;width:57px;height:17px;background:#ECE9D8;box-shadow:inset 1px 1px 0 #6E6A5A,inset 0 2px 0 #A09A88,inset -1px -1px 0 #FFFCEB;font-size:12px;line-height:18px;text-align:center"></div><div class="b" style="left:603px;top:386px;width:26px;height:17px;"><span style=""></span></div><div class="b" style="left:508px;top:410px;width:25px;height:17px;"><span style=""></span></div><div class="a" style="left:540px;top:410px;width:57px;height:17px;background:#ECE9D8;box-shadow:inset 1px 1px 0 #6E6A5A,inset 0 2px 0 #A09A88,inset -1px -1px 0 #FFFCEB;font-size:12px;line-height:18px;text-align:center"></div><div class="b" style="left:603px;top:410px;width:26px;height:17px;"><span style=""></span></div><div class="b" style="left:469px;top:449px;width:88px;height:25px;"><span style=""><span style="display:inline-block;white-space:nowrap;width:55px;vertical-align:top"><span style="display:inline-block;white-space:nowrap;font-size:12px;transform:scaleX(0.9167);transform-origin:0 50%">表示モード</span></span></span></div><div class="b" style="left:469px;top:481px;width:48px;height:25px;"><span style=""><svg class="a" style="left:18px;top:7px" width="10" height="11"><path d="M0.8,10.5 L4.8,0.8 L8.8,10.5" fill="none" stroke="#000" stroke-width="1.2"/></svg></span></div><div class="b" style="left:469px;top:513px;width:48px;height:25px;"><span style=""><svg class="a" style="left:18px;top:8px" width="10" height="11"><path d="M0.8,0.5 L4.8,10.2 L8.8,0.5" fill="none" stroke="#000" stroke-width="1.2"/></svg></span></div><svg class="a" style="left:276px;top:151px" width="44" height="44"><circle cx="22" cy="22" r="18.3" fill="none" stroke="#EE0A0A" stroke-width="2"/><path d="M22.5,9 H25.8 V35.6 H21.4 V16.5 Q18,17.5 14.5,17.2 V13.6 Q19.5,12.5 22.5,9 Z" fill="#F00000"/></svg><svg class="a" style="left:16.5px;top:200px" width="44" height="44"><circle cx="22" cy="22" r="18.3" fill="none" stroke="#EE0A0A" stroke-width="2"/><text x="22" y="35.8" text-anchor="middle" font-family="Liberation Sans" font-size="38" fill="#F00000" stroke="#F00000" stroke-width="0.9">2</text></svg><svg class="a" style="left:126.30000000000001px;top:199.6px" width="44" height="44"><circle cx="22" cy="22" r="18.3" fill="none" stroke="#EE0A0A" stroke-width="2"/><text x="22" y="35.8" text-anchor="middle" font-family="Liberation Sans" font-size="38" fill="#F00000" stroke="#F00000" stroke-width="0.9">3</text></svg></body></html>
